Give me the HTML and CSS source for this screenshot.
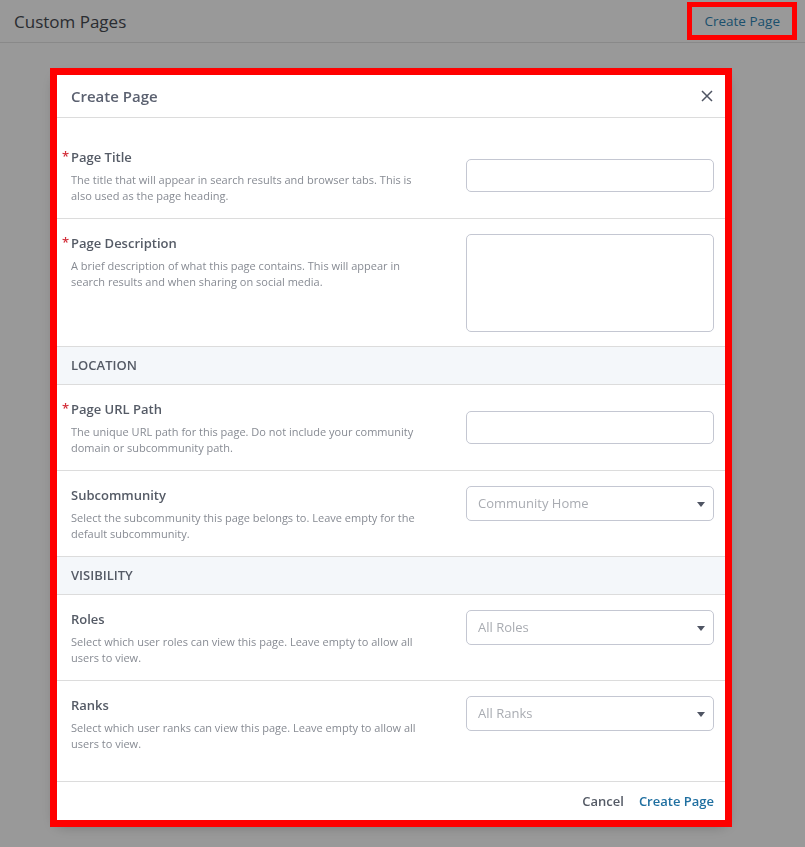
FILE: index.html
```html
<!DOCTYPE html>
<html lang="en">
<head>
    <meta charset="UTF-8">
    <meta name="viewport" content="width=device-width, initial-scale=1.0">
    <title>Custom Pages</title>
    <link rel="stylesheet" href="styles.css">
</head>
<body>
    <div class="page-header">
        <h1>Custom Pages</h1>
        <button class="header-btn">Create Page</button>
    </div>

    <div class="overlay">
        <div class="modal">
            <div class="modal-header">
                <h2>Create Page</h2>
                <button class="close-btn" aria-label="Close">
                    <svg width="12" height="12" viewBox="0 0 12 12"><path d="M1 1L11 11M11 1L1 11" stroke="#4f5563" stroke-width="1.5" fill="none"/></svg>
                </button>
            </div>

            <div class="modal-body">
                <div class="form-row">
                    <div class="field-info">
                        <label class="required">Page Title</label>
                        <p>The title that will appear in search results and browser tabs. This is also used as the page heading.</p>
                    </div>
                    <input type="text" class="text-input">
                </div>

                <div class="form-row">
                    <div class="field-info">
                        <label class="required">Page Description</label>
                        <p>A brief description of what this page contains. This will appear in search results and when sharing on social media.</p>
                    </div>
                    <textarea class="text-area"></textarea>
                </div>

                <div class="section-title">Location</div>

                <div class="form-row">
                    <div class="field-info">
                        <label class="required">Page URL Path</label>
                        <p>The unique URL path for this page. Do not include your community domain or subcommunity path.</p>
                    </div>
                    <input type="text" class="text-input">
                </div>

                <div class="form-row">
                    <div class="field-info">
                        <label>Subcommunity</label>
                        <p>Select the subcommunity this page belongs to. Leave empty for the default subcommunity.</p>
                    </div>
                    <div class="select-box">Community Home</div>
                </div>

                <div class="section-title">Visibility</div>

                <div class="form-row">
                    <div class="field-info">
                        <label>Roles</label>
                        <p>Select which user roles can view this page. Leave empty to allow all users to view.</p>
                    </div>
                    <div class="select-box">All Roles</div>
                </div>

                <div class="form-row last">
                    <div class="field-info">
                        <label>Ranks</label>
                        <p>Select which user ranks can view this page. Leave empty to allow all users to view.</p>
                    </div>
                    <div class="select-box">All Ranks</div>
                </div>
            </div>

            <div class="modal-footer">
                <button class="link-btn">Cancel</button>
                <button class="link-btn primary">Create Page</button>
            </div>
        </div>
    </div>
</body>
</html>
```

FILE: styles.css
```css
body {
    margin: 0;
    font-family: "Open Sans", Arial, sans-serif;
    background: #fff;
}
.page-header {
    display: flex;
    align-items: center;
    justify-content: space-between;
    height: 42px;
    padding: 0 12px 0 14px;
    border-bottom: 1px solid #e4e4e4;
}
.page-header h1 {
    margin: 0;
    font-size: 17px;
    font-weight: 500;
    color: #474b52;
}
.header-btn {
    position: relative;
    height: 26px;
    padding: 0 11px;
    margin-right: 2px;
    border: none;
    background: none;
    font-family: inherit;
    font-size: 13.5px;
    font-weight: 500;
    color: #2f85b6;
}
.header-btn::after {
    content: "";
    position: absolute;
    inset: -6px;
    border: 5px solid #ff0000;
    z-index: 20;
}
.overlay {
    position: fixed;
    inset: 0;
    background: rgba(0, 0, 0, 0.4);
    z-index: 10;
}
.modal {
    width: 668px;
    margin: 75px 0 0 57px;
    background: #fff;
    outline: 7px solid #ff0000;
    box-shadow: 0 4px 14px rgba(0, 0, 0, 0.35);
}
.modal-header {
    display: flex;
    align-items: center;
    justify-content: space-between;
    height: 42px;
    padding: 0 12px 0 14px;
    border-bottom: 1px solid #dcdcdc;
}
.modal-header h2 {
    margin: 0;
    font-size: 15px;
    font-weight: 600;
    color: #5b6170;
}
.close-btn {
    display: flex;
    padding: 0;
    border: none;
    background: none;
}
.modal-body {
    padding: 15px 0;
}
.form-row {
    display: grid;
    grid-template-columns: 1fr 248px;
    column-gap: 32px;
    align-items: start;
    padding: 15px 11px 14px 14px;
    border-bottom: 1px solid #dcdcdc;
}
.form-row.last {
    border-bottom: none;
}
.field-info label {
    position: relative;
    display: block;
    font-size: 13px;
    line-height: 18px;
    font-weight: 600;
    color: #555b66;
}
.field-info label.required::before {
    content: "*";
    position: absolute;
    left: -9px;
    top: -1px;
    color: #d32f3a;
}
.field-info p {
    margin: 6px 0 0;
    font-size: 11px;
    line-height: 16px;
    color: #878b93;
}
.text-input {
    box-sizing: border-box;
    height: 33px;
    margin-top: 11px;
    border: 1px solid #c4c7d2;
    border-radius: 5px;
    background: #fff;
}
.text-area {
    box-sizing: border-box;
    height: 98px;
    border: 1px solid #c4c7d2;
    border-radius: 5px;
    resize: none;
}
.select-box {
    box-sizing: border-box;
    position: relative;
    height: 35px;
    padding: 0 11px;
    border: 1px solid #c4c7d2;
    border-radius: 5px;
    font-size: 13px;
    line-height: 33px;
    color: #a9acb2;
}
.select-box::after {
    content: "";
    position: absolute;
    right: 8px;
    top: 15px;
    border-left: 4px solid transparent;
    border-right: 4px solid transparent;
    border-top: 5px solid #4f5563;
}
.section-title {
    padding: 0 14px;
    height: 37px;
    line-height: 37px;
    background: #f4f7fa;
    border-bottom: 1px solid #dcdcdc;
    font-size: 13px;
    font-weight: 600;
    text-transform: uppercase;
    color: #555b66;
}
.modal-footer {
    display: flex;
    justify-content: flex-end;
    align-items: center;
    gap: 15px;
    height: 38px;
    padding: 0 11px;
    border-top: 1px solid #dcdcdc;
}
.link-btn {
    padding: 0;
    border: none;
    background: none;
    font-family: inherit;
    font-size: 13px;
    font-weight: 600;
    color: #555b66;
}
.link-btn.primary {
    color: #1f6fa0;
}
```
